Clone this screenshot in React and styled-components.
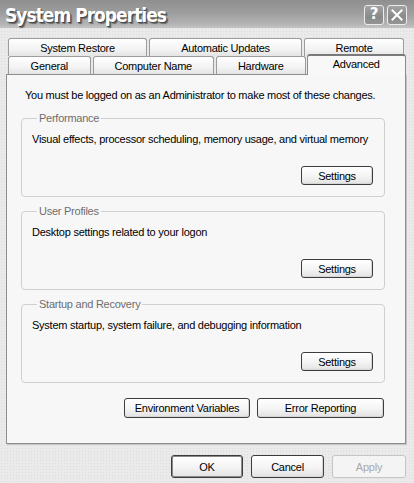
import React from 'react';
import styled, { createGlobalStyle, css } from 'styled-components';

const Global = createGlobalStyle`
  html, body {
    margin: 0;
    padding: 0;
    background: #e9e9e9;
  }
  body {
    font-family: "Liberation Sans", Arial, sans-serif;
    font-size: 11px;
    letter-spacing: -0.25px;
    color: #000;
  }
  * {
    box-sizing: border-box;
  }
`;

const Window = styled.div`
  width: 414px;
  height: 483px;
  display: flex;
  flex-direction: column;
  overflow: hidden;
  background-color: #eaeaea;
  background-image: radial-gradient(circle, #dcdcdc 0.7px, transparent 0.9px);
  background-size: 3px 3px;
`;

const TitleBar = styled.div`
  height: 28px;
  flex: none;
  display: flex;
  align-items: center;
  justify-content: space-between;
  padding: 0 7px 0 5px;
  background: linear-gradient(to bottom, #8f8f8f 0%, #9d9d9d 45%, #b3b3b3 85%, #c4c4c4 100%);
`;

const Title = styled.div`
  color: #fff;
  font-family: "DejaVu Sans Condensed", "DejaVu Sans", sans-serif;
  font-weight: bold;
  font-size: 19px;
  letter-spacing: -1px;
  line-height: 24px;
  margin-top: 2px;
  text-shadow: 1px 1px 0 #4a4a4a, 2px 2px 1px #6a6a6a;
`;

const Controls = styled.div`
  display: flex;
  gap: 3px;
  margin-top: 1px;
`;

const CaptionButton = styled.div`
  width: 20px;
  height: 20px;
  display: flex;
  align-items: center;
  justify-content: center;
  border: 1px solid #ececec;
  border-radius: 3px;
  background: linear-gradient(to bottom, #a2a2a2, #8a8a8a 60%, #959595);
  color: #fff;
  font-family: "DejaVu Sans", sans-serif;
  font-weight: bold;
  font-size: 15px;
  letter-spacing: 0;
  line-height: 1;
`;

const Body = styled.div`
  flex: 1;
  display: flex;
  flex-direction: column;
  padding: 10px 8px 0 6px;
`;

const TabStrip = styled.div`
  display: flex;
  flex-direction: column;
  padding-left: 2px;
`;

const TabRow = styled.div`
  display: flex;
  align-items: flex-end;
  gap: 2px;
  height: 18px;
`;

const Tab = styled.div`
  width: ${(p) => p.$w}px;
  height: 18px;
  display: flex;
  align-items: center;
  justify-content: center;
  border: 1px solid #9c9c9c;
  border-bottom: none;
  border-radius: 3px 3px 0 0;
  background: linear-gradient(to bottom, #ffffff, #f3f3f3 60%, #e4e4e4);
  white-space: nowrap;

  ${(p) =>
    p.$active &&
    css`
      position: relative;
      z-index: 1;
      height: 21px;
      margin-bottom: -1px;
      margin-left: -1px;
      align-items: flex-start;
      padding-top: 2px;
      background: #f8f8f8;
      border-color: #8c8c8c;
      border-top: 2px solid #7a7a7a;
    `}
`;

const Panel = styled.div`
  width: 400px;
  height: 370px;
  display: flex;
  flex-direction: column;
  padding: 14px 20px 0 14px;
  background-color: #f7f7f7;
  border: 1px solid #8e8e8e;
  box-shadow: 1px 1px 0 #c4c4c4;
`;

const Notice = styled.div`
  padding-left: 4px;
  line-height: 13px;
  white-space: nowrap;
`;

const Groups = styled.div`
  display: flex;
  flex-direction: column;
  gap: 8px;
  margin-top: 10px;
`;

const Group = styled.fieldset`
  margin: 0;
  padding: 0 11px 11px 9px;
  border: 1px solid #cfcfcf;
  border-radius: 4px;
  min-width: 0;
`;

const Legend = styled.legend`
  margin-left: 6px;
  padding: 0 2px;
  line-height: 13px;
  color: #6e6e6e;
`;

const Description = styled.div`
  margin-top: 8px;
  padding-left: 1px;
  line-height: 13px;
  white-space: nowrap;
`;

const ButtonRow = styled.div`
  display: flex;
  justify-content: flex-end;
  gap: ${(p) => p.$gap || 8}px;
  margin-top: ${(p) => p.$top || 0}px;
  padding-right: ${(p) => p.$right || 0}px;
`;

const Button = styled.button`
  width: ${(p) => p.$w}px;
  height: ${(p) => p.$h || 20}px;
  padding: 0;
  font-family: "Liberation Sans", Arial, sans-serif;
  font-size: 11px;
  letter-spacing: -0.25px;
  color: #000;
  border: 1px solid #3d3d3d;
  border-radius: 3px;
  background: linear-gradient(to bottom, #ffffff, #f4f4f4 55%, #e2e2e2);
  box-shadow: inset -1px -1px 0 #d6d6d6;

  ${(p) =>
    p.$default &&
    css`
      box-shadow: inset 0 0 0 1px #8a8a8a;
    `}

  ${(p) =>
    p.disabled &&
    css`
      color: #a9a9a9;
      border-color: #c6c6c6;
      background: #f4f4f4;
      box-shadow: none;
    `}
`;

const CloseIcon = () => (
  <svg width="12" height="12" viewBox="0 0 12 12">
    <path d="M1.5 1.5 L10.5 10.5 M10.5 1.5 L1.5 10.5" stroke="#fff" strokeWidth="2" strokeLinecap="square" />
  </svg>
);

const groups = [
  {
    title: 'Performance',
    text: 'Visual effects, processor scheduling, memory usage, and virtual memory',
  },
  { title: 'User Profiles', text: 'Desktop settings related to your logon' },
  {
    title: 'Startup and Recovery',
    text: 'System startup, system failure, and debugging information',
  },
];

const App = () => {
  return (
    <Window>
      <Global />
      <TitleBar>
        <Title>System Properties</Title>
        <Controls>
          <CaptionButton>?</CaptionButton>
          <CaptionButton>
            <CloseIcon />
          </CaptionButton>
        </Controls>
      </TitleBar>

      <Body>
        <TabStrip>
          <TabRow>
            <Tab $w={139}>System Restore</Tab>
            <Tab $w={153}>Automatic Updates</Tab>
            <Tab $w={100}>Remote</Tab>
          </TabRow>
          <TabRow>
            <Tab $w={83}>General</Tab>
            <Tab $w={122}>Computer Name</Tab>
            <Tab $w={90}>Hardware</Tab>
            <Tab $w={100} $active>
              Advanced
            </Tab>
          </TabRow>
        </TabStrip>

        <Panel>
          <Notice>You must be logged on as an Administrator to make most of these changes.</Notice>
          <Groups>
            {groups.map((g) => (
              <Group key={g.title}>
                <Legend>{g.title}</Legend>
                <Description>{g.text}</Description>
                <ButtonRow $top={20}>
                  <Button $w={72} $h={19}>
                    Settings
                  </Button>
                </ButtonRow>
              </Group>
            ))}
          </Groups>
          <ButtonRow $top={15} $gap={7} $right={1}>
            <Button $w={126}>Environment Variables</Button>
            <Button $w={127}>Error Reporting</Button>
          </ButtonRow>
        </Panel>

        <ButtonRow $top={11}>
          <Button $w={72} $h={23} $default>
            OK
          </Button>
          <Button $w={73} $h={23}>
            Cancel
          </Button>
          <Button $w={74} $h={23} disabled>
            Apply
          </Button>
        </ButtonRow>
      </Body>
    </Window>
  );
};

export default App;
